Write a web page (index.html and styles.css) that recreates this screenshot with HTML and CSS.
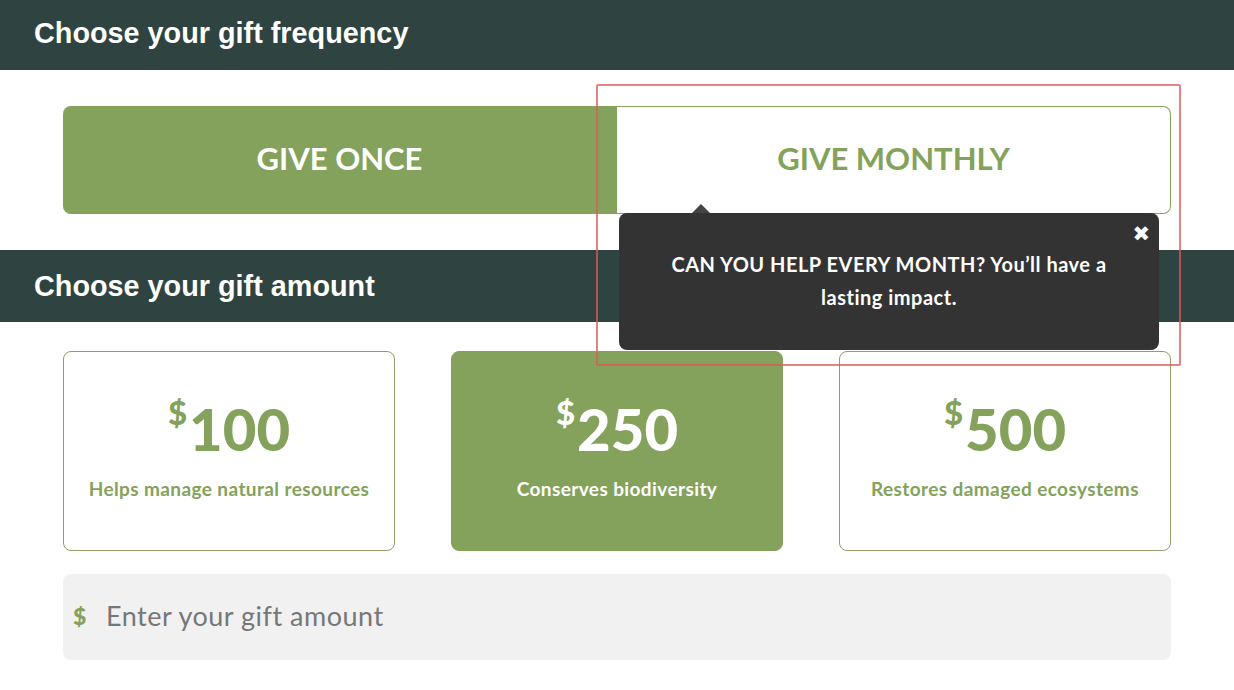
FILE: index.html
```html
<!DOCTYPE html>
<html lang="en">
<head>
<meta charset="utf-8">
<title>Gift</title>
<link rel="stylesheet" href="styles.css">
</head>
<body>
<div class="page">
  <h2 class="bar">Choose your gift frequency</h2>
  <div class="content">
    <div class="toggle">
      <button class="tog active">GIVE ONCE</button>
      <button class="tog">GIVE MONTHLY</button>
      <div class="tooltip">
        <span class="close">&#10006;</span>
        <p>CAN YOU HELP EVERY MONTH? You’ll have a<br>lasting impact.</p>
      </div>
    </div>
  </div>
  <h2 class="bar bar2">Choose your gift amount</h2>
  <div class="content">
    <div class="cards">
      <div class="card"><div class="amt"><sup>$</sup>100</div><div class="desc">Helps manage natural resources</div></div>
      <div class="card sel"><div class="amt"><sup>$</sup>250</div><div class="desc">Conserves biodiversity</div></div>
      <div class="card"><div class="amt"><sup>$</sup>500</div><div class="desc">Restores damaged ecosystems</div></div>
    </div>
    <div class="input">
      <span class="cur">$</span>
      <span class="ph">Enter your gift amount</span>
    </div>
  </div>
  <div class="highlight"></div>
</div>
</body>
</html>
```
FILE: styles.css
```css
* { box-sizing: border-box; }
body { margin: 0; background: #fff; font-family: Lato, "Noto Sans", sans-serif; }
.page { position: relative; width: 1234px; height: 690px; overflow: hidden; }
.bar {
  margin: 0; height: 70px; background: #2f4441; color: #fff;
  font-family: "Liberation Sans", Arial, sans-serif; font-weight: bold; font-size: 28.8px;
  display: flex; align-items: center; padding-left: 34px; padding-bottom: 3px;
}
.bar2 { height: 72px; padding-bottom: 0; }
.content { padding: 0 63px; }
.toggle { position: relative; display: flex; margin: 36px 0; height: 108px; }
.tog {
  flex: 1; border: 1px solid #84a25b; background: #fff; color: #84a25b;
  font-family: Lato, sans-serif; font-weight: bold; font-size: 31px; padding: 0 0 4px;
  border-radius: 0 8px 8px 0; border-left: none;
}
.tog.active { background: #84a25b; color: #fff; border-radius: 8px 0 0 8px; }
.tooltip {
  position: absolute; left: 556px; top: 107px; width: 540px; height: 137px;
  background: #333; border-radius: 8px; color: #fff; z-index: 2;
  display: flex; align-items: center; justify-content: center;
}
.tooltip::before {
  content: ""; position: absolute; left: 73px; top: -9px;
  border-left: 9px solid transparent; border-right: 9px solid transparent; border-bottom: 9px solid #444;
}
.tooltip p { margin: 0; text-align: center; font-weight: bold; font-size: 20px; letter-spacing: 0.5px; line-height: 33px; padding-bottom: 2px; }
.close { position: absolute; right: 9px; top: 10px; font-size: 21px; line-height: 22px; font-family: "DejaVu Sans", sans-serif; }
.cards { display: flex; gap: 56px; margin-top: 29px; }
.card {
  flex: 1; height: 200px; border: 1px solid #939d6b; border-radius: 8px; color: #84a25b;
  display: flex; flex-direction: column; align-items: center; padding-top: 42px;
}
.card.sel { background: #84a25b; border-color: #84a25b; color: #fff; }
.amt { font-weight: 900; font-size: 58px; line-height: 70px; }
.amt sup { font-size: 33px; vertical-align: top; line-height: 36px; margin-right: 2px; }
.desc { font-weight: bold; font-size: 19px; letter-spacing: 0.4px; margin-top: 13px; }
.input {
  margin-top: 23px; height: 86px; background: #f1f1f1; border-radius: 8px;
  display: flex; align-items: center; padding-left: 10px; padding-bottom: 3px;
}
.cur { color: #84a25b; font-weight: 900; font-size: 23px; width: 33px; }
.ph { color: #777; font-size: 27px; letter-spacing: 0.5px; }
.highlight {
  position: absolute; left: 596px; top: 84px; width: 585px; height: 282px;
  border: 2px solid rgba(220, 90, 90, 0.75); border-radius: 2px; z-index: 3; pointer-events: none;
}
```
